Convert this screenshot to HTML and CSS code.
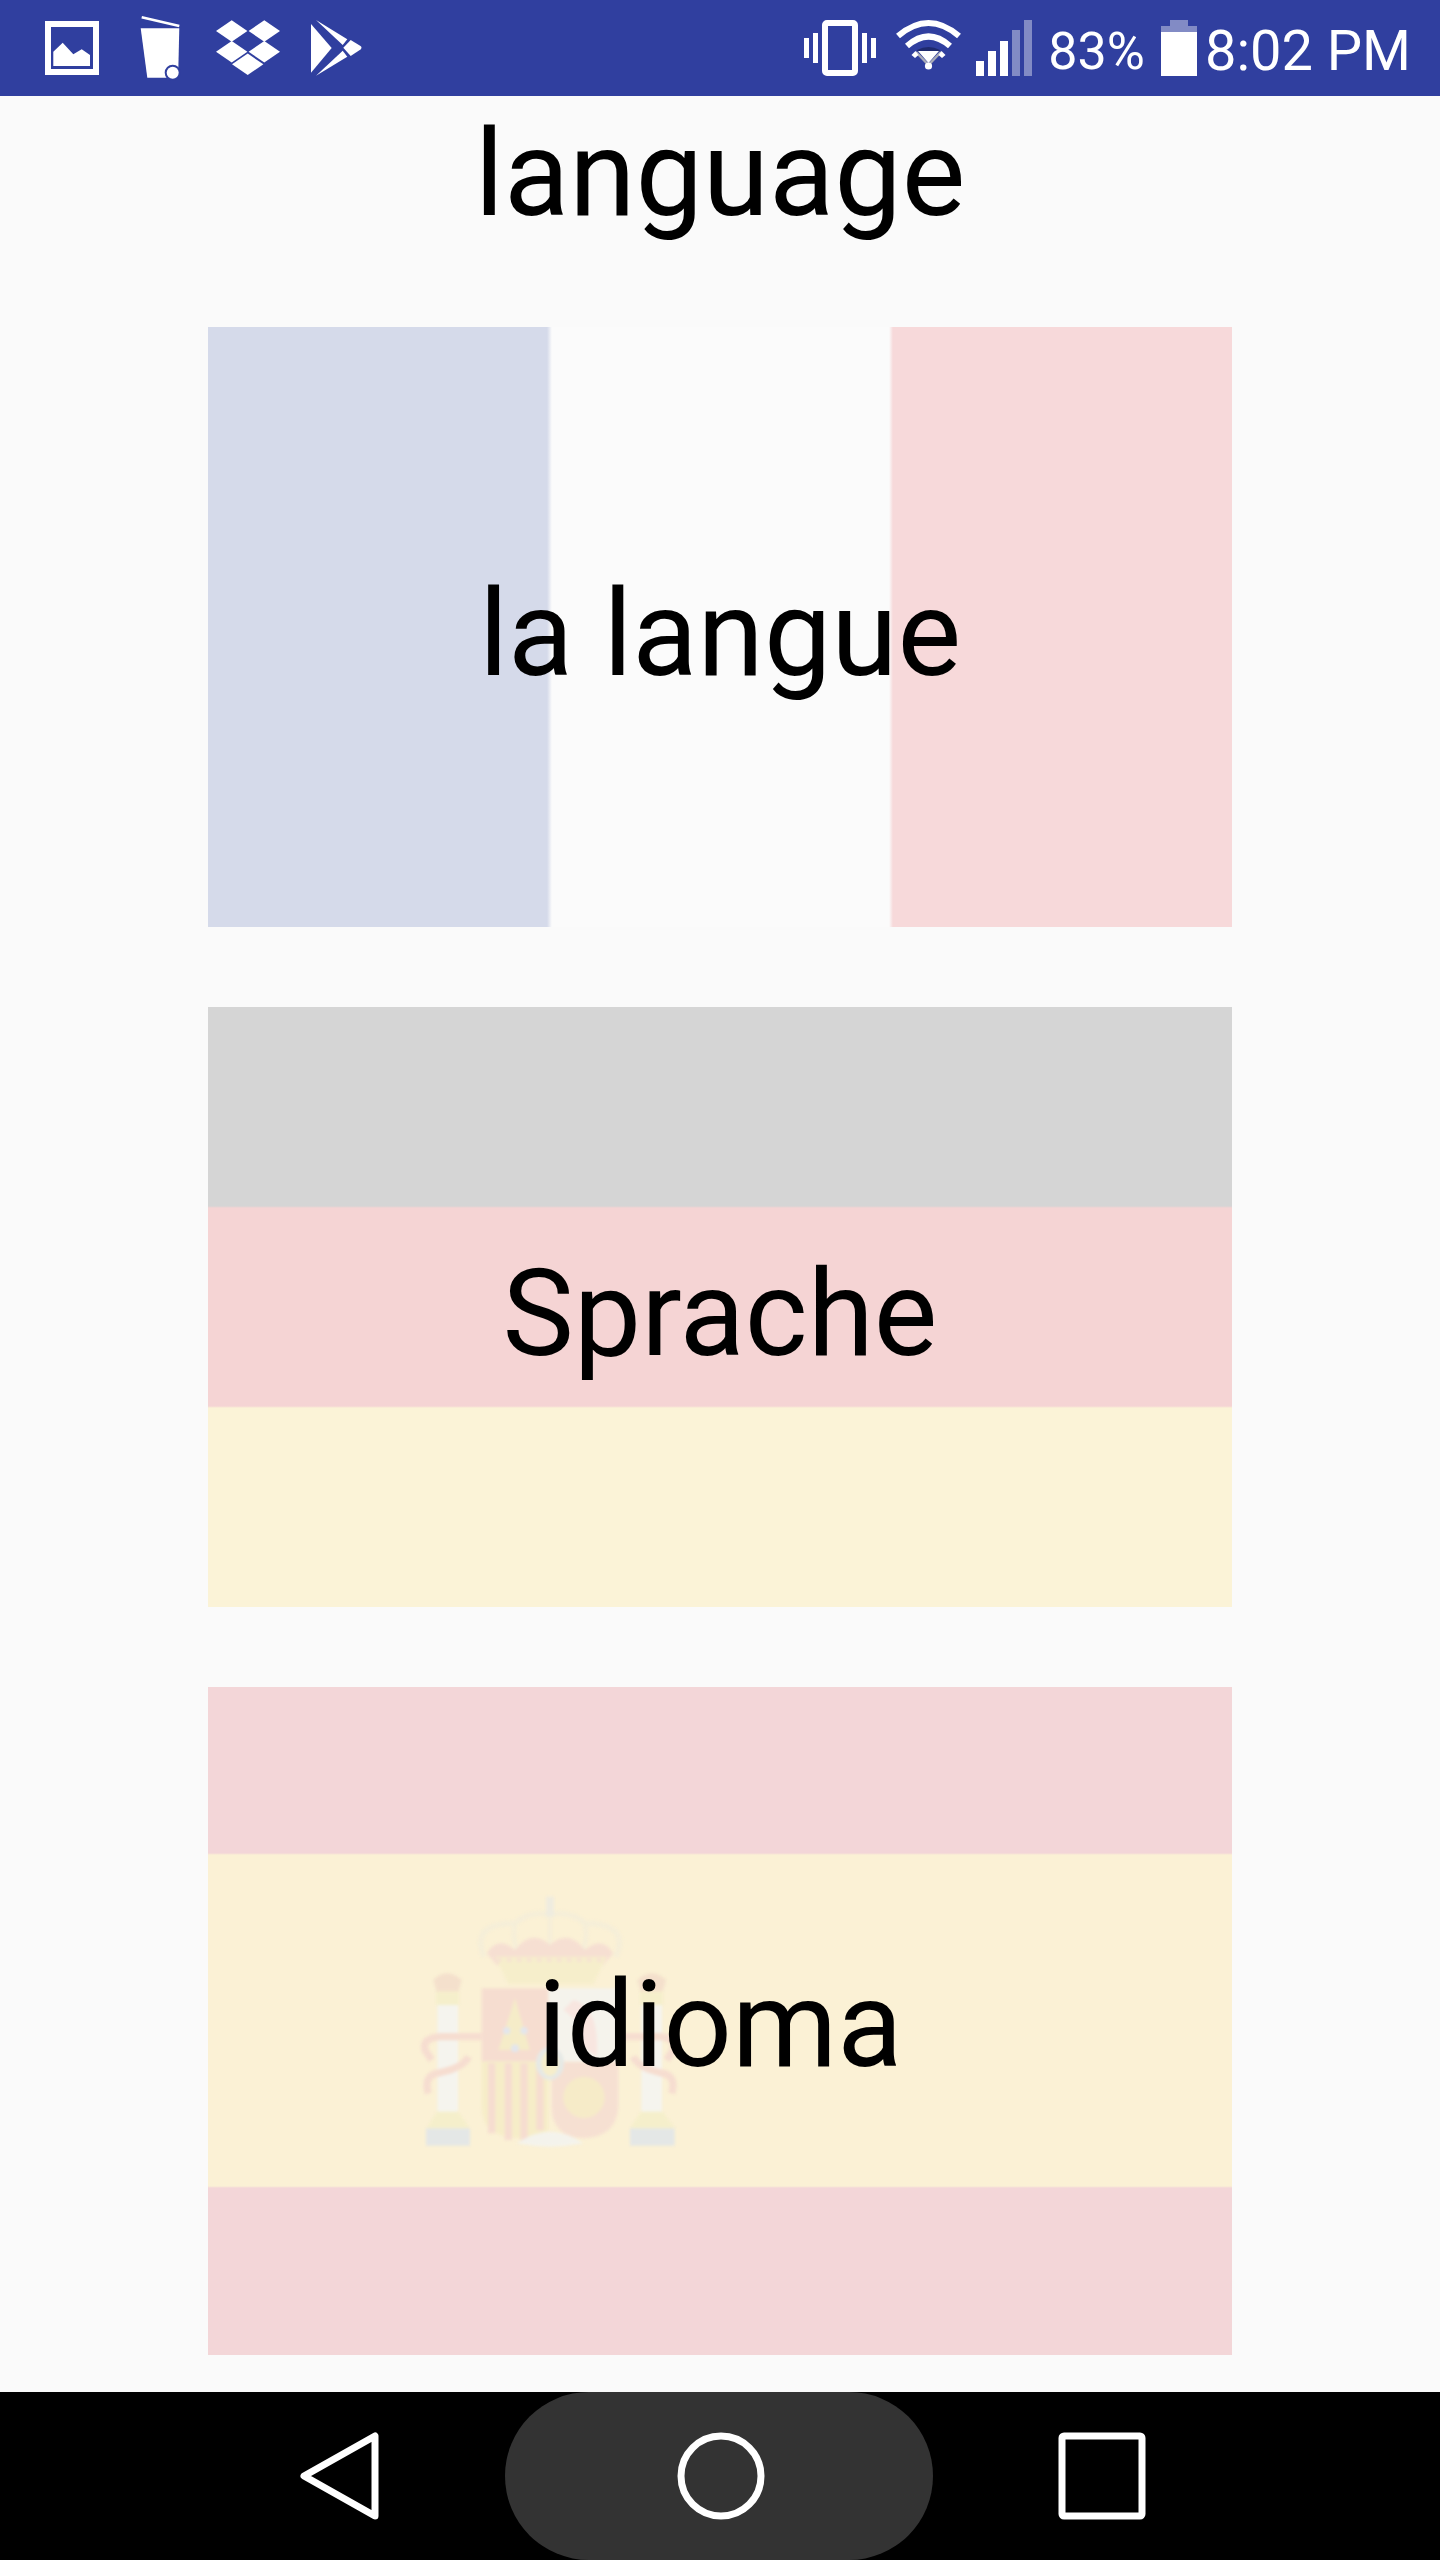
FILE: index.html
```html
<!DOCTYPE html>
<html lang="en">
<head>
  <meta charset="UTF-8">
  <title>language</title>
  <link rel="stylesheet" href="styles.css">
</head>
<body>

  <div class="status-bar">
    <div class="notif-icons">
      <svg class="notif" viewBox="0 0 88 96">
        <rect x="20" y="24" width="48" height="48" fill="none" stroke="#fff" stroke-width="6"/>
        <path d="M25.3 51.7L34.7 42.7L45.3 54.3L53.7 49.3L62 55V66H25.3Z" fill="#fff"/>
      </svg>
      <svg class="notif" viewBox="0 0 88 96">
        <path d="M25.7 17.3L63.3 26" stroke="#fff" stroke-width="2.5"/>
        <path d="M24.7 28.3H63.3L62.3 70L50 77.7H31.3Z" fill="#fff"/>
        <circle cx="56.7" cy="72.7" r="8" fill="#303f9f"/>
        <circle cx="56.7" cy="72.7" r="6" fill="#fff"/>
      </svg>
      <svg class="notif" viewBox="0 0 88 96" fill="#fff">
        <path d="M12 31L27.7 20.3L43.4 31L27.7 41.7Z"/>
        <path d="M44.6 31L60.3 20.3L76 31L60.3 41.7Z"/>
        <path d="M12 51.7L27.7 41L43.4 51.7L27.7 62.4Z"/>
        <path d="M44.6 51.7L60.3 41L76 51.7L60.3 62.4Z"/>
        <path d="M28 64.3L43.7 53.6L59.4 64.3L43.7 75Z"/>
      </svg>
      <svg class="notif" viewBox="0 0 88 96" fill="#fff">
        <path d="M19 24L39.7 48L19 72.7Z"/>
        <path d="M24 20L55.3 39.3L50.7 45Z"/>
        <path d="M24 75.7L55.3 56.7L50.7 50.7Z"/>
        <path d="M58.7 40L68.5 46Q70.5 47.5 68.5 49.5L58.7 56L51.3 47.7Z"/>
      </svg>
    </div>
    <div class="system-icons">
      <svg class="ic-vibrate" viewBox="0 0 72 96">
        <rect x="21" y="23" width="30" height="50" rx="2" fill="none" stroke="#fff" stroke-width="6"/>
        <path d="M0 38H5V58H0ZM9 33H14V63H9ZM58 33H63V63H58ZM67 38H72V58H67Z" fill="#fff"/>
      </svg>
      <svg class="ic-wifi" viewBox="0 0 67 96">
        <path d="M3 36Q33.5 10 64 36" fill="none" stroke="#fff" stroke-width="6"/>
        <path d="M12 46Q33.5 27 55 46" fill="none" stroke="#fff" stroke-width="6"/>
        <path d="M22 50Q33.5 44 45 50L44 52H23Z" fill="#1f2a6e"/>
        <path d="M23 51H44L33.5 63Z" fill="#fff"/>
        <path d="M21 52L33.5 65L46 52" fill="none" stroke="#a9abb8" stroke-width="2.5"/>
        <path d="M16.5 55L20.5 51L23.5 55L20 58ZM50.5 55L46.5 51L43.5 55L47 58Z" fill="#fff"/>
        <circle cx="33.5" cy="66" r="3.6" fill="#fff"/>
      </svg>
      <svg class="ic-signal" viewBox="0 0 56 96">
        <path d="M0 61H8V76H0ZM12 51H20V76H12ZM24 41H32V76H24Z" fill="#fff"/>
        <path d="M36 30H44V76H36ZM48 20H56V76H48Z" fill="#fff" fill-opacity="0.4"/>
      </svg>
      <span class="battery-pct">83%</span>
      <svg class="ic-battery" viewBox="0 0 36 96">
        <path d="M9 20H27V26H36V32H0V26H9Z" fill="#fff" fill-opacity="0.4"/>
        <rect x="0" y="32" width="36" height="44" fill="#fff"/>
      </svg>
      <span class="clock">8:02 PM</span>
    </div>
  </div>

  <div class="content">
    <h1 class="title">language</h1>

    <div class="flag-list">
      <div class="flag flag-fr">la langue</div>
      <div class="flag flag-de">Sprache</div>
      <div class="flag flag-es">
        <!-- escudo, posicionado sobre a faixa amarela -->
        <svg class="emblem" viewBox="0 0 1020 960">
          <!-- coluna esquerda -->
          <path d="M160 360Q200 320 245 360L235 395H170Z" fill="#f4e0cc"/>
          <rect x="168" y="395" width="70" height="40" fill="#f5efcb"/>
          <rect x="172" y="435" width="62" height="320" fill="#f5f4ee"/>
          <path d="M170 755H235L270 805H140Z" fill="#f5efcb"/>
          <rect x="138" y="805" width="132" height="52" fill="#e4e7e6"/>
          <!-- coluna direita -->
          <path d="M772 360Q815 320 858 360L848 395H782Z" fill="#f4e0cc"/>
          <rect x="780" y="395" width="70" height="40" fill="#f5efcb"/>
          <rect x="784" y="435" width="62" height="320" fill="#f5f4ee"/>
          <path d="M782 755H848L885 805H750Z" fill="#f5efcb"/>
          <rect x="750" y="805" width="134" height="52" fill="#e4e7e6"/>
          <!-- fitas -->
          <path d="M305 530H180Q125 535 135 570L155 600M265 590Q250 625 170 640Q130 650 145 700" fill="none" stroke="#f6ddd0" stroke-width="22"/>
          <path d="M715 530H840Q890 535 880 570L860 600M760 590Q775 625 850 640Q890 650 875 700" fill="none" stroke="#f6ddd0" stroke-width="22"/>
          <!-- coroa -->
          <path d="M312 290Q270 190 405 190Q450 150 510 165Q570 150 615 190Q750 190 708 290" fill="none" stroke="#f5eed8" stroke-width="16"/>
          <path d="M405 190Q395 230 415 290M615 190Q625 230 605 290M510 165V290" fill="none" stroke="#f5eed8" stroke-width="14"/>
          <path d="M510 110V170" stroke="#efecdf" stroke-width="24"/>
          <path d="M320 280Q355 225 405 270Q455 205 510 255Q565 205 615 270Q665 225 700 280L670 315H350Z" fill="#f6dfd2"/>
          <path d="M345 290H680L640 372H385Z" fill="#f6eecb"/>
          <path d="M350 300H670" stroke="#f6e2d2" stroke-width="12" stroke-dasharray="14 16"/>
          <!-- escudo -->
          <rect x="305" y="385" width="200" height="220" fill="#f6ddd0"/>
          <path d="M405 415L450 570H355Z" fill="#f5ecc8"/>
          <rect x="505" y="385" width="205" height="220" fill="#f5f3ec"/>
          <path d="M580 420Q660 440 650 590L610 560Q600 480 550 450Z" fill="#f8e6e0"/>
          <path d="M305 605H505V810Q420 860 330 810Q305 780 305 740Z" fill="#f6edc8"/>
          <path d="M335 610V820M385 610V840M432 610V840M480 610V810" stroke="#f6ddd0" stroke-width="22"/>
          <path d="M515 605H715V740Q710 830 610 835Q515 830 515 740Z" fill="#f6e0d2"/>
          <circle cx="612" cy="712" r="62" fill="#f6ebc8"/>
          <path d="M410 850Q510 780 610 850Q510 870 410 850Z" fill="#f4f3ec"/>
          <ellipse cx="510" cy="610" rx="42" ry="50" fill="#e6e9e6"/>
          <ellipse cx="510" cy="610" rx="26" ry="38" fill="#f6eecb"/>
          <circle cx="380" cy="512" r="11" fill="#e3e6ec"/>
          <circle cx="432" cy="512" r="11" fill="#e3e6ec"/>
          <circle cx="405" cy="565" r="12" fill="#e3e6ec"/>
        </svg>
        <span class="flag-label">idioma</span>
      </div>
    </div>
  </div>

  <div class="nav-bar">
    <div class="nav-btn">
      <svg class="nav-icon" viewBox="0 0 88 88">
        <path d="M79 4V84L8 44Z" fill="none" stroke="#fff" stroke-width="7" stroke-linejoin="round"/>
      </svg>
    </div>
    <div class="nav-btn nav-home">
      <svg class="nav-icon" viewBox="0 0 88 88">
        <circle cx="44" cy="44" r="40" fill="none" stroke="#fff" stroke-width="7"/>
      </svg>
    </div>
    <div class="nav-btn">
      <svg class="nav-icon" viewBox="0 0 88 88">
        <rect x="4" y="4" width="80" height="80" rx="2" fill="none" stroke="#fff" stroke-width="7"/>
      </svg>
    </div>
  </div>

</body>
</html>
```

FILE: styles.css
```css
body {
  margin: 0;
  width: 1440px;
  height: 2560px;
  display: flex;
  flex-direction: column;
  background: #fafafa;
  font-family: Roboto, sans-serif;
  color: #000;
}

/* barra de status */
.status-bar {
  height: 96px;
  flex-shrink: 0;
  display: flex;
  justify-content: space-between;
  background: #303f9f;
  color: #fff;
}

.notif-icons {
  display: flex;
  padding-left: 28px;
}

.notif {
  width: 88px;
  height: 96px;
}

.system-icons {
  display: flex;
  align-items: center;
  padding-right: 29px;
}

.system-icons svg {
  height: 96px;
}

.ic-vibrate {
  width: 72px;
}

.ic-wifi {
  width: 67px;
  margin-left: 19px;
}

.ic-signal {
  width: 56px;
  margin-left: 14px;
}

.battery-pct {
  margin-left: 16px;
  padding-top: 6px;
  font-size: 52px;
}

.ic-battery {
  width: 36px;
  margin-left: 16px;
}

.clock {
  margin-left: 8px;
  padding-top: 6px;
  font-size: 56px;
}

/* conteudo */
.content {
  flex: 1;
  padding: 0 208px;
}

.title {
  margin: 0 0 75px;
  font-size: 120px;
  font-weight: 400;
  line-height: 156px;
  text-align: center;
}

.flag-list {
  display: flex;
  flex-direction: column;
  gap: 80px;
}

.flag {
  position: relative;
  box-sizing: border-box;
  height: 600px;
  padding-top: 13px;
  display: flex;
  align-items: center;
  justify-content: center;
  font-size: 120px;
}

.flag-fr {
  background: linear-gradient(to right, #d5daea 339px, #fbfbfb 344px, #fbfbfb 681px, #f7d9da 685px);
}

.flag-de {
  background: linear-gradient(to bottom, #d5d5d5 199px, #f5d4d4 201px, #f5d4d4 399px, #fbf3d7 401px);
}

.flag-es {
  height: 668px;
  padding-top: 8px;
  background: linear-gradient(to bottom, #f3d6d8 166px, #fbf1d5 168px, #fbf1d5 499px, #f3d6d8 501px);
}

.flag-label {
  position: relative;
}

.emblem {
  position: absolute;
  left: 172px;
  top: 173px;
  width: 340px;
  height: 320px;
  filter: blur(1.5px);
}

/* barra de navegacao */
.nav-bar {
  height: 168px;
  flex-shrink: 0;
  box-sizing: border-box;
  padding-right: 2px;
  display: flex;
  justify-content: center;
  background: #000;
}

.nav-btn {
  box-sizing: border-box;
  width: 334px;
  padding-left: 3px;
  display: flex;
  align-items: center;
  justify-content: center;
}

.nav-home {
  width: 428px;
  background: #333;
  border-radius: 84px;
}

.nav-icon {
  width: 88px;
  height: 88px;
}
```
